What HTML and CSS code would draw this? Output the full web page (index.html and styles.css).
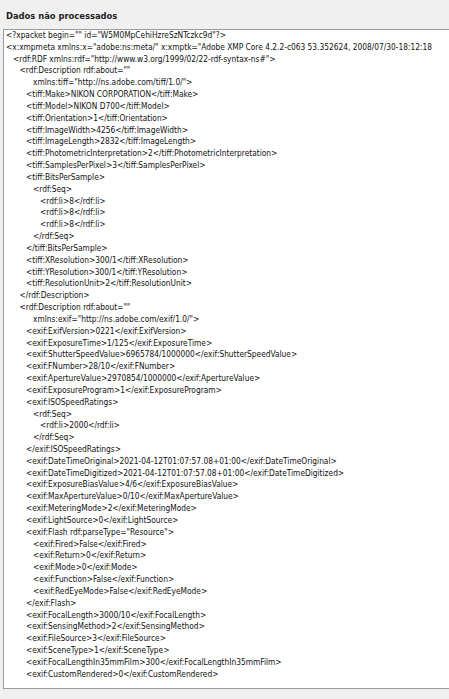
FILE: index.html
```html
<!DOCTYPE html>
<html lang="pt">
<head>
<meta charset="utf-8">
<title>Dados não processados</title>
<link rel="stylesheet" href="styles.css">
</head>
<body>
<div class="panel">
  <h1 class="title">Dados não processados</h1>
  <div class="raw">
    <div class="l i0">&lt;?xpacket begin="" id="W5M0MpCehiHzreSzNTczkc9d"?&gt;</div>
    <div class="l i0">&lt;x:xmpmeta xmlns:x="adobe:ns:meta/" x:xmptk="Adobe XMP Core 4.2.2-c063 53.352624, 2008/07/30-18:12:18</div>
    <div class="l i1">&lt;rdf:RDF xmlns:rdf="http://www.w3.org/1999/02/22-rdf-syntax-ns#"&gt;</div>
    <div class="l i2">&lt;rdf:Description rdf:about=""</div>
    <div class="l i4">xmlns:tiff="http://ns.adobe.com/tiff/1.0/"&gt;</div>
    <div class="l i3">&lt;tiff:Make&gt;NIKON CORPORATION&lt;/tiff:Make&gt;</div>
    <div class="l i3">&lt;tiff:Model&gt;NIKON D700&lt;/tiff:Model&gt;</div>
    <div class="l i3">&lt;tiff:Orientation&gt;1&lt;/tiff:Orientation&gt;</div>
    <div class="l i3">&lt;tiff:ImageWidth&gt;4256&lt;/tiff:ImageWidth&gt;</div>
    <div class="l i3">&lt;tiff:ImageLength&gt;2832&lt;/tiff:ImageLength&gt;</div>
    <div class="l i3">&lt;tiff:PhotometricInterpretation&gt;2&lt;/tiff:PhotometricInterpretation&gt;</div>
    <div class="l i3">&lt;tiff:SamplesPerPixel&gt;3&lt;/tiff:SamplesPerPixel&gt;</div>
    <div class="l i3">&lt;tiff:BitsPerSample&gt;</div>
    <div class="l i4">&lt;rdf:Seq&gt;</div>
    <div class="l i5">&lt;rdf:li&gt;8&lt;/rdf:li&gt;</div>
    <div class="l i5">&lt;rdf:li&gt;8&lt;/rdf:li&gt;</div>
    <div class="l i5">&lt;rdf:li&gt;8&lt;/rdf:li&gt;</div>
    <div class="l i4">&lt;/rdf:Seq&gt;</div>
    <div class="l i3">&lt;/tiff:BitsPerSample&gt;</div>
    <div class="l i3">&lt;tiff:XResolution&gt;300/1&lt;/tiff:XResolution&gt;</div>
    <div class="l i3">&lt;tiff:YResolution&gt;300/1&lt;/tiff:YResolution&gt;</div>
    <div class="l i3">&lt;tiff:ResolutionUnit&gt;2&lt;/tiff:ResolutionUnit&gt;</div>
    <div class="l i2">&lt;/rdf:Description&gt;</div>
    <div class="l i2">&lt;rdf:Description rdf:about=""</div>
    <div class="l i4">xmlns:exif="http://ns.adobe.com/exif/1.0/"&gt;</div>
    <div class="l i3">&lt;exif:ExifVersion&gt;0221&lt;/exif:ExifVersion&gt;</div>
    <div class="l i3">&lt;exif:ExposureTime&gt;1/125&lt;/exif:ExposureTime&gt;</div>
    <div class="l i3">&lt;exif:ShutterSpeedValue&gt;6965784/1000000&lt;/exif:ShutterSpeedValue&gt;</div>
    <div class="l i3">&lt;exif:FNumber&gt;28/10&lt;/exif:FNumber&gt;</div>
    <div class="l i3">&lt;exif:ApertureValue&gt;2970854/1000000&lt;/exif:ApertureValue&gt;</div>
    <div class="l i3">&lt;exif:ExposureProgram&gt;1&lt;/exif:ExposureProgram&gt;</div>
    <div class="l i3">&lt;exif:ISOSpeedRatings&gt;</div>
    <div class="l i4">&lt;rdf:Seq&gt;</div>
    <div class="l i5">&lt;rdf:li&gt;2000&lt;/rdf:li&gt;</div>
    <div class="l i4">&lt;/rdf:Seq&gt;</div>
    <div class="l i3">&lt;/exif:ISOSpeedRatings&gt;</div>
    <div class="l i3">&lt;exif:DateTimeOriginal&gt;2021-04-12T01:07:57.08+01:00&lt;/exif:DateTimeOriginal&gt;</div>
    <div class="l i3">&lt;exif:DateTimeDigitized&gt;2021-04-12T01:07:57.08+01:00&lt;/exif:DateTimeDigitized&gt;</div>
    <div class="l i3">&lt;exif:ExposureBiasValue&gt;4/6&lt;/exif:ExposureBiasValue&gt;</div>
    <div class="l i3">&lt;exif:MaxApertureValue&gt;0/10&lt;/exif:MaxApertureValue&gt;</div>
    <div class="l i3">&lt;exif:MeteringMode&gt;2&lt;/exif:MeteringMode&gt;</div>
    <div class="l i3">&lt;exif:LightSource&gt;0&lt;/exif:LightSource&gt;</div>
    <div class="l i3">&lt;exif:Flash rdf:parseType="Resource"&gt;</div>
    <div class="l i4">&lt;exif:Fired&gt;False&lt;/exif:Fired&gt;</div>
    <div class="l i4">&lt;exif:Return&gt;0&lt;/exif:Return&gt;</div>
    <div class="l i4">&lt;exif:Mode&gt;0&lt;/exif:Mode&gt;</div>
    <div class="l i4">&lt;exif:Function&gt;False&lt;/exif:Function&gt;</div>
    <div class="l i4">&lt;exif:RedEyeMode&gt;False&lt;/exif:RedEyeMode&gt;</div>
    <div class="l i3">&lt;/exif:Flash&gt;</div>
    <div class="l i3">&lt;exif:FocalLength&gt;3000/10&lt;/exif:FocalLength&gt;</div>
    <div class="l i3">&lt;exif:SensingMethod&gt;2&lt;/exif:SensingMethod&gt;</div>
    <div class="l i3">&lt;exif:FileSource&gt;3&lt;/exif:FileSource&gt;</div>
    <div class="l i3">&lt;exif:SceneType&gt;1&lt;/exif:SceneType&gt;</div>
    <div class="l i3">&lt;exif:FocalLengthIn35mmFilm&gt;300&lt;/exif:FocalLengthIn35mmFilm&gt;</div>
    <div class="l i3">&lt;exif:CustomRendered&gt;0&lt;/exif:CustomRendered&gt;</div>
  </div>
</div>
</body>
</html>
```

FILE: styles.css
```css
html, body {
  margin: 0;
  padding: 0;
  background: #f0f0f0;
  width: 449px;
  height: 699px;
  overflow: hidden;
}

.panel {
  display: flex;
  flex-direction: column;
  padding: 0 0 0 3px;
}

.title {
  margin: 0 0 7px 0;
  padding: 10px 0 0 3px;
  font-family: "DejaVu Sans Condensed", "DejaVu Sans", sans-serif;
  font-weight: bold;
  font-size: 9.3px;
  line-height: 12px;
  color: #1e1e1e;
}

.raw {
  box-sizing: border-box;
  height: 660px;
  background: #ffffff;
  border: 1px solid #9c9c9c;
  border-right: none;
  padding: 0 0 0 2px;
  font-family: "DejaVu Sans Condensed", "DejaVu Sans", sans-serif;
  font-size: 8.3px;
  line-height: 11.83px;
  color: #111;
  overflow: hidden;
}

.l { white-space: pre; }
.i0 { padding-left: 0; }
.i1 { padding-left: 7px; }
.i2 { padding-left: 13.5px; }
.i3 { padding-left: 20px; }
.i4 { padding-left: 27px; }
.i5 { padding-left: 34px; }
```
